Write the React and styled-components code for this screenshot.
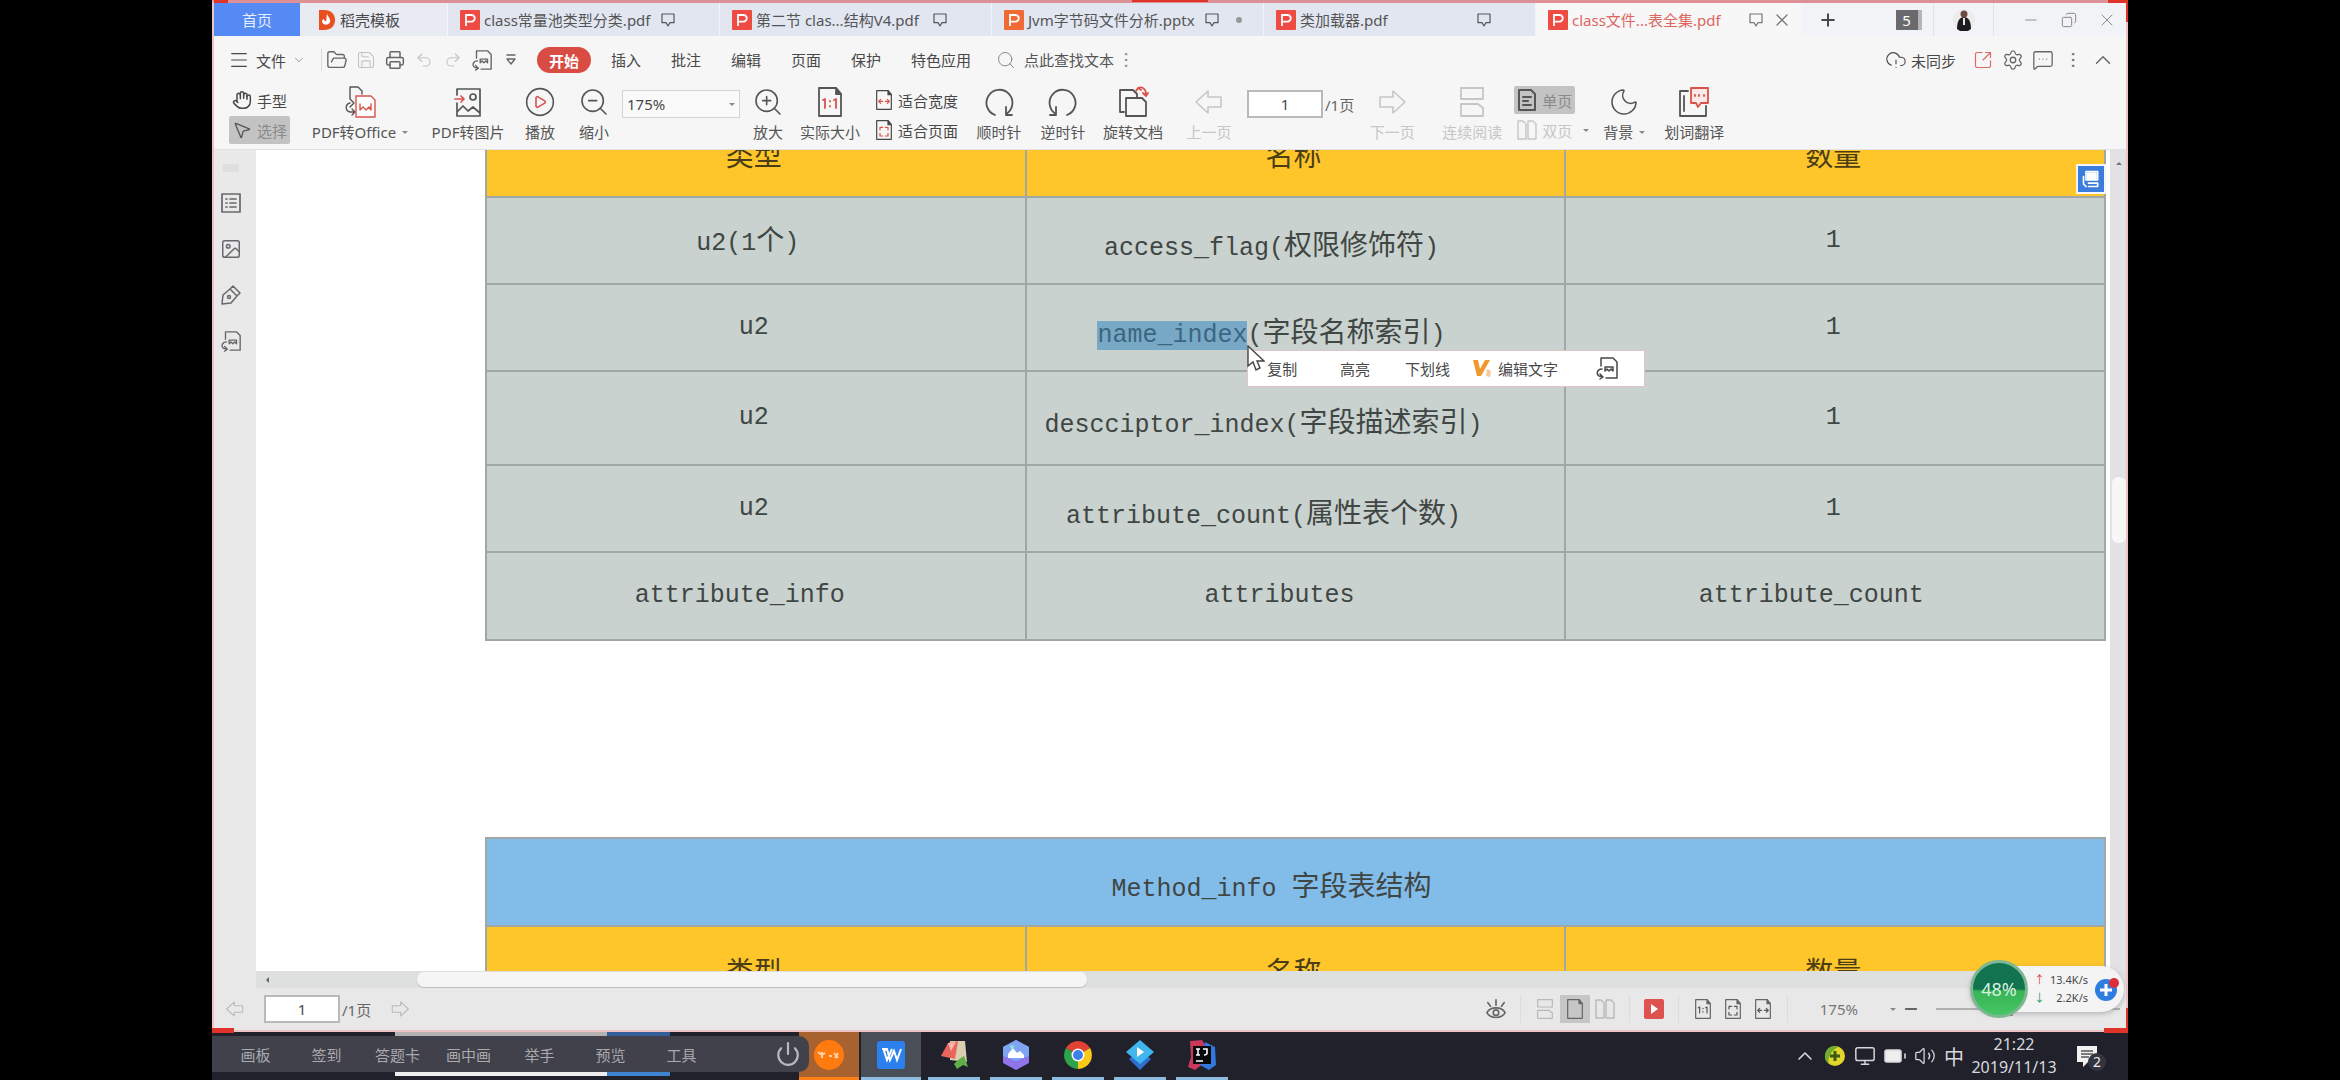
import styled, { createGlobalStyle, css } from "styled-components";
import {
    FolderOpen, Save, Printer, Undo2, Redo2, Search, CloudAlert, SquareArrowOutUpRight, Settings,
    MessageSquareMore, EllipsisVertical, ChevronUp, ChevronDown, Hand, MousePointer2, Menu, X, Plus, Minus,
    Copy, Moon, ZoomIn, ZoomOut, CirclePlay, Power, Volume2, Monitor, BatteryFull, Image,
} from "lucide-react";

/* ---------- data ---------- */

const tabs = [
    { kind: "pdf", name: "class常量池类型分类.pdf" },
    { kind: "pdf", name: "第二节 clas...结构V4.pdf" },
    { kind: "ppt", name: "Jvm字节码文件分析.pptx", changed: true },
    { kind: "pdf", name: "类加载器.pdf" },
    { kind: "pdf", name: "class文件...表全集.pdf", active: true },
];

const menus = ["插入", "批注", "编辑", "页面", "保护", "特色应用"];

const rows = [
    { height: 87, cells: [["u2(1", "个", ")", 16], ["access_flag(", "权限修饰符", ")", 48], ["1"]] },
    { height: 87, selected: true, cells: [["u2"], ["(", "字段名称索引", ")", 48], ["1"]] },
    { height: 94, cells: [["u2"], ["descciptor_index(", "字段描述索引", ")", 64], ["1"]] },
    { height: 87, cells: [["u2"], ["attribute_count(", "属性表个数", ")", 64], ["1"]] },
    { height: 88, cells: [["attribute_info", "", "", 32], ["attributes", "", "", 32], ["attribute_count", "", "", 48]] },
];

const remoteItems = ["画板", "签到", "答题卡", "画中画", "举手", "预览", "工具"];

/* ---------- icons ---------- */

const Line = ({ w = 24, h = w, box = "0 0 24 24", sw = 1.4, children }) => (
    <svg width={w} height={h} viewBox={box} fill="none" stroke="currentColor" strokeWidth={sw} strokeLinejoin="round" strokeLinecap="round" aria-hidden="true">
        {children}
    </svg>
);

const DocBadge = ({ color }) => (
    <svg width="20" height="20" viewBox="0 0 20 20" aria-hidden="true">
        <rect width="20" height="20" rx="1" fill={color} />
        <path d="M6 16V5h5.5a3.3 3.3 0 0 1 0 6.6H6" fill="none" stroke="#fff" strokeWidth="1.8" />
    </svg>
);

const DockerIcon = () => (
    <svg width="17" height="20" viewBox="0 0 17 20" aria-hidden="true">
        <path d="M1 0h5c7 0 11 4 11 10s-4 10-11 10H1z" fill="#e8501f" />
        <path d="M9 4c1 3 4 5 3 8-1 3-6 4-8 0 0-2 1-3 2-3 0 2 1 2 2 2 1-2 0-4 1-7z" fill="#fff" />
    </svg>
);

const PinIcon = () => (
    <Line w={16} sw={1.8}><path d="M3 3h18v13h-6l-3 5-3-5H3z" /></Line>
);

const ExportIcon = ({ size = 22 }) => (
    <Line w={size} sw={1.5}>
        <path d="M6 10V2h12l4 4v16H11" />
        <path d="M10 15v-4h8v4l-2-2-2 2-2-2z" />
        <path d="M7 13c-5 0-6 5-3 7l4 1M5 18l3 3-3 2" />
    </Line>
);

const OutlineIcon = () => (
    <Line w={20} h={20} box="0 0 20 20" sw={1.7}>
        <path d="M1 1h18v18H1zM5 6h1M5 10h1M5 14h1M9 6h6M9 10h6M9 14h6" />
    </Line>
);

const TagPenIcon = () => (
    <Line w={20} h={20} box="0 0 20 20" sw={1.5}>
        <path d="M1 19l1-9 7-6 7 7-6 7zM9 4l3-3 7 7-3 3" />
        <circle cx="8" cy="12" r="1.500" />
    </Line>
);

const ToOfficeIcon = () => (
    <Line w={32} box="0 0 32 32">
        <path d="M6 13V1h8l4 4v3M6 17c-5 1-5 8 0 9h4M8 23l3 3-3 3M6 13l4 4-4 4" />
        <path d="M12 10h15l4 4v17H12z" stroke="#d9534c" fill="#fff" />
        <path d="M16 18v6l3-3 3 3 3-3 2 3v-6" stroke="#d9534c" />
    </Line>
);

const ToImageIcon = () => (
    <Line w={28} h={30} box="0 0 28 30" sw={1.7}>
        <path d="M3 8V2h23v27H3V16M3 25l6-6 5 5 5-4 7 6" />
        <circle cx="19" cy="10" r="3" />
        <path d="M1 12h9M7 9l3 3-3 3" stroke="#d9534c" />
    </Line>
);

const SheetIcon = ({ w = 26, h = 30, children }) => (
    <Line w={w} h={h} box="0 0 26 30" sw={1.8}>
        <path d="M2 1h17l5 6v22H2z" />
        <path d="M19 1v6h5z" fill="currentColor" />
        <g stroke="#d9534c">{children}</g>
    </Line>
);

const OneToOne = () => <path d="M6 13l2-1v9M13 14v.5M13 19v.5M17 13l2-1v9" />;
const FitWidth = () => <path d="M6 17h5M8 14l-3 3 3 3M20 17h-5M18 14l3 3-3 3" />;
const FitPage = () => <path d="M7 15v-4h4M15 11h4v4M19 20v4h-4M11 24H7v-4" />;

const TurnIcon = ({ flip }) => (
    <Line w={30} box="0 0 30 30" sw={1.8}>
        {flip
            ? <path d="M19 28A13 13 0 1 0 8 27M8 20v8H2" />
            : <path d="M11 28A13 13 0 1 1 22 27M22 20v8h6" />}
    </Line>
);

const TurnDocIcon = () => (
    <Line w={32} box="0 0 32 32" sw={1.8}>
        <path d="M7 26H3V4h13l4 4v4" />
        <path d="M9 12h16l4 4v14H9z" />
        <path d="M21 2c4-2 8 1 8 6M26 7l3 3 2-3M19 5l2-3 3 2" stroke="#d9534c" />
    </Line>
);

const ArrowIcon = ({ flip, size = 28 }) => (
    <Line w={size} box="0 0 28 28" sw={1.6}>
        {flip
            ? <path d="M27 14L15 3v6H2v10h13v6z" />
            : <path d="M1 14L13 3v6h13v10H13v6z" />}
    </Line>
);

const FlowPagesIcon = ({ w = 26, h = 30 }) => (
    <Line w={w} h={h} box="0 0 26 30" sw={1.8}>
        <path d="M2 1v11h22V1zM2 29V17h17l5 4v8z" />
    </Line>
);

const SinglePageIcon = () => (
    <Line w={20} h={22} box="0 0 20 22" sw={2}>
        <path d="M2 1h12l4 4v16H2zM6 8h8M6 12h5M6 16h8" />
    </Line>
);

const TwoPagesIcon = () => (
    <Line w={20} h={20} box="0 0 20 20">
        <path d="M1 1h5l3 3v15H1zM11 1h5l3 3v15h-8z" />
    </Line>
);

const TranslateIcon = () => (
    <Line w={32} box="0 0 32 32" sw={1.8}>
        <path d="M10 5H2v25h26V20M6 10v15" />
        <path d="M13 2h17v15h-7l-3 4-2-4h-5z" stroke="#d9534c" fill="#fbe9e8" />
        <path d="M17 9v1M21 9v1M26 9v1" stroke="#d9534c" />
    </Line>
);

const EyeIcon = () => (
    <Line w={22} sw={1.8}>
        <path d="M2 16c4-7 16-7 20 0-4 7-16 7-20 0zM12 8V2M6 9L3 5M18 9l3-4" />
        <circle cx="12" cy="16" r="3" />
    </Line>
);

const ChromeIcon = () => (
    <svg width="28" height="28" viewBox="0 0 28 28" aria-hidden="true">
        <path d="M14 14L1.900 7A14 14 0 0 1 26.100 7z" fill="#e34133" />
        <path d="M14 14L26.100 7A14 14 0 0 1 14 28z" fill="#fbc918" />
        <path d="M14 14V28A14 14 0 0 1 1.900 7z" fill="#2fa24c" />
        <circle cx="14" cy="14" r="6.500" fill="#fff" />
        <circle cx="14" cy="14" r="5" fill="#3f7fe8" />
    </svg>
);

/* ---------- app ---------- */

const App = () => {
    return (
        <Screen>
            <GlobalStyle />
            <Desktop>
                <EdgeMark $top="0" $left="2px" $w="14px" $h="3px" />
                <EdgeMark $top="0" $left="48%" $w="76px" $h="2px" />
                <EdgeMark $top="0" $right="0" $w="20px" $h="3px" />
                <EdgeMark $top="0" $right="0" $w="2px" $h="22px" />
                <OfficeWindow>
                    <TabStrip />
                    <MenuRow />
                    <Ribbon />
                    <WorkArea />
                    <StatusBar />
                    <SpeedWidget />
                    <EdgeMark $bottom="-3px" $left="-2px" $w="22px" $h="5px" />
                    <EdgeMark $bottom="-3px" $right="-2px" $w="24px" $h="5px" />
                    <EdgeMark $bottom="0" $right="-2px" $w="2px" $h="22px" />
                </OfficeWindow>
                <TaskBar />
            </Desktop>
        </Screen>
    );
};

export default App;

const TabStrip = () => (
    <Tabs>
        <HomeTab>首页</HomeTab>
        <DockerTab><DockerIcon />稻壳模板</DockerTab>
        {tabs.map((tab) => (
            <Tab key={tab.name} $active={tab.active}>
                <DocBadge color={tab.kind === "pdf" ? "#ee4b45" : "#f06a35"} />
                <TabName>{tab.name}</TabName>
                <PinIcon />
                {tab.changed && <TabDot />}
                {tab.active && <X size={20} strokeWidth={1.5} />}
            </Tab>
        ))}
        <NewTab aria-label="新建"><Plus size={20} strokeWidth={2.4} /></NewTab>
        <WindowTools>
            <CountSlot><CountBadge>5</CountBadge></CountSlot>
            <AvatarSlot aria-label="账号">
                <svg width="22" height="22" viewBox="0 0 22 22" aria-hidden="true">
                    <circle cx="11" cy="11" r="11" fill="#ececec" />
                    <path d="M4 20c0-7 2-12 7-12s7 5 7 12l-3 2H7z" fill="#1d1d1f" />
                    <circle cx="11" cy="5" r="3.500" fill="#6b4b40" />
                    <path d="M10 9h2v7h-2z" fill="#e6e6e6" />
                </svg>
            </AvatarSlot>
            <WinButton aria-label="最小化"><Minus size={18} strokeWidth={1.2} /></WinButton>
            <WinButton aria-label="还原"><Copy size={16} strokeWidth={1.5} /></WinButton>
            <WinButton aria-label="关闭"><X size={20} strokeWidth={1.2} /></WinButton>
        </WindowTools>
    </Tabs>
);

const MenuRow = () => (
    <MenuBar>
        <FileButton><Menu size={22} strokeWidth={1.2} />文件<ChevronDown size={14} strokeWidth={1.4} /></FileButton>
        <QuickButton aria-label="打开"><FolderOpen size={22} strokeWidth={1.5} /></QuickButton>
        <QuickButton aria-label="保存" $dim><Save size={20} strokeWidth={1.3} /></QuickButton>
        <QuickButton aria-label="打印"><Printer size={20} strokeWidth={1.8} /></QuickButton>
        <QuickButton aria-label="撤销" $dim><Undo2 size={18} strokeWidth={1.5} /></QuickButton>
        <QuickButton aria-label="恢复" $dim><Redo2 size={18} strokeWidth={1.5} /></QuickButton>
        <QuickButton aria-label="导出"><ExportIcon /></QuickButton>
        <QuickButton aria-label="更多"><Line w={10} h={12} box="0 0 10 12"><path d="M1 1h8M1 5h8l-4 5z" /></Line></QuickButton>
        <StartPill>开始</StartPill>
        {menus.map((name) => <MenuButton key={name}>{name}</MenuButton>)}
        <SearchLabel>
            <Search size={20} strokeWidth={1.2} />
            <SearchInput type="text" placeholder="点此查找文本" aria-label="点此查找文本" />
            <EllipsisVertical size={20} strokeWidth={1.2} />
        </SearchLabel>
        <MenuEnd>
            <SyncButton><CloudAlert size={22} strokeWidth={1.2} />未同步</SyncButton>
            <IconButton aria-label="分享" $red><SquareArrowOutUpRight size={20} strokeWidth={1.4} /></IconButton>
            <IconButton aria-label="设置"><Settings size={22} strokeWidth={1.4} /></IconButton>
            <IconButton aria-label="反馈"><MessageSquareMore size={22} strokeWidth={1.4} /></IconButton>
            <IconButton aria-label="更多"><EllipsisVertical size={20} strokeWidth={1.2} /></IconButton>
            <IconButton aria-label="收起"><ChevronUp size={26} strokeWidth={1.3} /></IconButton>
        </MenuEnd>
    </MenuBar>
);

const Ribbon = () => (
    <RibbonBar>
        <Pair>
            <PairButton><Hand size={20} strokeWidth={1.8} />手型</PairButton>
            <PairButton $picked><MousePointer2 size={20} strokeWidth={1.6} />选择</PairButton>
        </Pair>
        <Tool $w={140}><ToOfficeIcon /><ToolText>PDF转Office<Caret /></ToolText></Tool>
        <Tool $w={76}><ToImageIcon /><ToolText>PDF转图片</ToolText></Tool>
        <Tool $w={68}><Red><CirclePlay size={34} strokeWidth={1.2} /></Red><ToolText>播放</ToolText></Tool>
        <Tool $w={40}><ZoomOut size={34} strokeWidth={1.2} /><ToolText>缩小</ToolText></Tool>
        <ZoomBox>
            <ZoomField type="text" defaultValue="175%" aria-label="缩放比例" />
            <Caret />
        </ZoomBox>
        <Tool $w={48}><ZoomIn size={34} strokeWidth={1.2} /><ToolText>放大</ToolText></Tool>
        <Tool $w={76}><SheetIcon><OneToOne /></SheetIcon><ToolText>实际大小</ToolText></Tool>
        <FitPair>
            <PairButton><SheetIcon w={18} h={20}><FitWidth /></SheetIcon>适合宽度</PairButton>
            <PairButton><SheetIcon w={18} h={20}><FitPage /></SheetIcon>适合页面</PairButton>
        </FitPair>
        <Tool $w={64}><TurnIcon /><ToolText>顺时针</ToolText></Tool>
        <Tool $w={64}><TurnIcon flip /><ToolText>逆时针</ToolText></Tool>
        <Tool $w={76}><TurnDocIcon /><ToolText>旋转文档</ToolText></Tool>
        <Tool $w={76} $dim><ArrowIcon /><ToolText>上一页</ToolText></Tool>
        <PageBox>
            <PageField type="text" defaultValue="1" aria-label="页码" />
            <span>/1页</span>
        </PageBox>
        <Tool $w={76} $dim><ArrowIcon flip /><ToolText>下一页</ToolText></Tool>
        <Tool $w={84} $dim><FlowPagesIcon /><ToolText>连续阅读</ToolText></Tool>
        <Pair>
            <PairButton $picked><SinglePageIcon />单页</PairButton>
            <PairButton $dim><TwoPagesIcon />双页<Caret /></PairButton>
        </Pair>
        <Tool $w={64}><Moon size={34} strokeWidth={1.2} /><ToolText>背景<Caret /></ToolText></Tool>
        <Tool $w={76}><TranslateIcon /><ToolText>划词翻译</ToolText></Tool>
    </RibbonBar>
);

const WorkArea = () => (
    <Work>
        <SideBar>
            <SideGrip />
            <SideButton aria-label="目录"><OutlineIcon /></SideButton>
            <SideButton aria-label="缩略图"><Image size={22} strokeWidth={1.6} /></SideButton>
            <SideButton aria-label="批注"><TagPenIcon /></SideButton>
            <SideButton aria-label="导出"><ExportIcon /></SideButton>
        </SideBar>
        <Viewer>
            <ViewerRow>
                <Paper>
                    <InfoTable>
                        <thead><HeadRow /></thead>
                        <tbody>
                            {rows.map((row, i) => (
                                <tr key={i}>
                                    {row.cells.map((cell, n) => (
                                        <BodyCell key={n} $h={row.height} $pad={cell[3]} $han={n === 1 && cell[1]}>
                                            {row.selected && n === 1 && <Selection />}
                                            {cell[0]}{cell[1] && <Han>{cell[1]}</Han>}{cell[2]}
                                        </BodyCell>
                                    ))}
                                </tr>
                            ))}
                        </tbody>
                    </InfoTable>
                    <InfoTable>
                        <thead>
                            <tr><TitleCell colSpan={3}>Method_info <Han>字段表结构</Han></TitleCell></tr>
                            <HeadRow />
                        </thead>
                    </InfoTable>
                    <ConvertBadge aria-label="转换">
                        <Line w={20} sw={2}><path d="M6 3h14v10H6zM9 17h11v4H9M3 9v9l3 3" /><path d="M8 5h10v6H8z" fill="#fff" /></Line>
                    </ConvertBadge>
                </Paper>
                <VScroll><UpTick /><VThumb /></VScroll>
            </ViewerRow>
            <HScroll><LeftTick /><HThumb /></HScroll>
        </Viewer>
    </Work>
);

const HeadRow = () => (
    <tr>
        <HeadCell>类型</HeadCell>
        <HeadCell>名称</HeadCell>
        <HeadCell>数量</HeadCell>
    </tr>
);

const Selection = () => (
    <Selected>
        name_index
        <Popup>
            <PopupButton $w={68}>复制</PopupButton>
            <PopupButton $w={78}>高亮</PopupButton>
            <PopupButton $w={68}>下划线</PopupButton>
            <PopupButton $w={108}>
                <svg width="20" height="20" viewBox="0 0 20 20" aria-hidden="true">
                    <path d="M1 2h5l2 9 5-9h5L9 18H5z" fill="#f0982c" />
                    <path d="M15 11l4 2-1 6-4-1z" fill="#f6c79a" />
                </svg>
                编辑文字
            </PopupButton>
            <PopupButton $w={76} aria-label="导出"><ExportIcon size={24} /></PopupButton>
        </Popup>
        <Pointer width="18" height="26" viewBox="0 0 18 26" aria-hidden="true">
            <path d="M1 1v20l5-4 3 8 4-2-3-7h7z" fill="#fff" stroke="#444" strokeWidth="1.400" />
        </Pointer>
    </Selected>
);

const StatusBar = () => (
    <Status>
        <StatusButton $dim aria-label="上一页"><ArrowIcon size={18} /></StatusButton>
        <PageBox>
            <PageField type="text" defaultValue="1" aria-label="当前页" />
            <span>/1页</span>
        </PageBox>
        <StatusButton $dim aria-label="下一页"><ArrowIcon flip size={18} /></StatusButton>
        <StatusEnd>
            <StatusGroup><StatusButton aria-label="护眼模式"><EyeIcon /></StatusButton></StatusGroup>
            <StatusGroup>
                <StatusButton $dim aria-label="连续阅读"><FlowPagesIcon w={18} h={20} /></StatusButton>
                <StatusButton $picked aria-label="单页"><SheetIcon w={18} h={20} /></StatusButton>
                <StatusButton $dim aria-label="双页"><TwoPagesIcon /></StatusButton>
            </StatusGroup>
            <StatusGroup>
                <StatusButton aria-label="播放">
                    <svg width="20" height="20" viewBox="0 0 20 20" aria-hidden="true">
                        <rect width="20" height="20" rx="2" fill="#de5350" />
                        <path d="M7 5l7 5-7 5z" fill="#fff" />
                    </svg>
                </StatusButton>
            </StatusGroup>
            <StatusGroup>
                <StatusButton aria-label="实际大小"><SheetIcon w={18} h={20}><g stroke="#555"><OneToOne /></g></SheetIcon></StatusButton>
                <StatusButton aria-label="适合页面"><SheetIcon w={18} h={20}><g stroke="#555"><FitPage /></g></SheetIcon></StatusButton>
                <StatusButton aria-label="适合宽度"><SheetIcon w={18} h={20}><g stroke="#555"><FitWidth /></g></SheetIcon></StatusButton>
            </StatusGroup>
            <ZoomText>175%</ZoomText>
            <Caret />
            <StatusButton aria-label="缩小"><Minus size={18} strokeWidth={2.4} /></StatusButton>
            <ZoomLine type="range" defaultValue="40" aria-label="缩放" />
        </StatusEnd>
    </Status>
);

const SpeedWidget = () => (
    <Speed>
        <SpeedBall>48%</SpeedBall>
        <SpeedList>
            <SpeedRow><SpeedArrow $up>↑</SpeedArrow>13.4K/s</SpeedRow>
            <SpeedRow><SpeedArrow>↓</SpeedArrow>2.2K/s</SpeedRow>
        </SpeedList>
        <svg width="26" height="26" viewBox="0 0 26 26" aria-hidden="true">
            <circle cx="12" cy="14" r="11" fill="#2f7de1" />
            <path d="M12 8v12M6 14h12" stroke="#fff" strokeWidth="3" />
            <circle cx="20" cy="7" r="5" fill="#dd2f3a" />
        </svg>
    </Speed>
);

const TaskBar = () => (
    <Task>
        <RemoteStrip>
            <StripeRow $pale />
            <RemotePanel>
                {remoteItems.map((name) => <RemoteButton key={name}>{name}</RemoteButton>)}
                <PowerButton aria-label="退出"><Power size={26} strokeWidth={2} /></PowerButton>
            </RemotePanel>
            <StripeRow />
        </RemoteStrip>
        <AppButton $tone="orange" aria-label="直播">
            <svg width="30" height="30" viewBox="0 0 30 30" aria-hidden="true">
                <circle cx="15" cy="15" r="15" fill="#ff7a0f" />
                <path d="M4 12l4 3 3-2M8 12v6M15 16h3M20 13l4 5M24 13l-3 5" stroke="#ffd3a8" strokeWidth="2" fill="none" />
            </svg>
        </AppButton>
        <AppButton $tone="current" aria-label="WPS">
            <svg width="28" height="28" viewBox="0 0 28 28" aria-hidden="true">
                <rect width="28" height="28" rx="3" fill="#2c80ee" />
                <path d="M5 8h5l3 11 4-9 3 9 4-11M10 8l-3 2 3 9 5-11" fill="none" stroke="#fff" strokeWidth="2" />
            </svg>
        </AppButton>
        <AppButton aria-label="笔记">
            <svg width="28" height="30" viewBox="0 0 28 30" aria-hidden="true">
                <path d="M10 1h15l2 21-17-2z" fill="#d9cfae" />
                <path d="M8 3l10-2-3 18-14-3z" fill="#e9655c" />
                <path d="M8 3l8-1-5 9z" fill="#f7b7ae" />
                <path d="M18 20l6-4 4 11-5-2-6 4-3-5z" fill="#5fae48" />
            </svg>
        </AppButton>
        <AppButton aria-label="图库">
            <svg width="28" height="30" viewBox="0 0 28 30" aria-hidden="true">
                <path d="M14 0l13 7v16l-13 7-13-7V7z" fill="#8f74ea" />
                <path d="M14 0l13 7v9l-13 5-13-5V7z" fill="#7ea4f2" />
                <path d="M6 18v-4l5-6 4 5 3-2 4 4v3z" fill="#fff" />
                <circle cx="10" cy="7" r="2" fill="#8fe0e0" />
            </svg>
        </AppButton>
        <AppButton aria-label="Chrome"><ChromeIcon /></AppButton>
        <AppButton aria-label="播放器">
            <svg width="30" height="30" viewBox="0 0 30 30" aria-hidden="true">
                <path d="M15 10l11 9-11 11L4 19z" fill="#2f6fd0" />
                <path d="M15 0l14 12-14 12L1 12z" fill="#41b5ee" />
                <path d="M12 7l7 5-7 5z" fill="#fff" />
            </svg>
        </AppButton>
        <AppButton aria-label="IntelliJ IDEA">
            <svg width="30" height="30" viewBox="0 0 30 30" aria-hidden="true">
                <path d="M3 1l12-1 5 8-4 16-8 6-7-3 3-10z" fill="#c8395c" />
                <path d="M18 2l10 5 1 18-7 5-9-5z" fill="#3179e0" />
                <rect x="6" y="6" width="18" height="18" fill="#0a0a0c" />
                <path d="M9 9h4M11 9v6M9 15h4M16 9h4v4q0 2-3 2M9 21h7" stroke="#fff" strokeWidth="1.600" fill="none" />
            </svg>
        </AppButton>
        <Tray>
            <TrayButton aria-label="显示隐藏的图标"><ChevronUp size={24} strokeWidth={1.6} /></TrayButton>
            <TrayButton aria-label="安全卫士">
                <svg width="22" height="22" viewBox="0 0 22 22" aria-hidden="true">
                    <circle cx="11" cy="11" r="10" fill="#e3d62a" />
                    <path d="M11 1a10 10 0 0 0-6 18c-2-6 2-13 9-17z" fill="#6fae2c" />
                    <path d="M11 6v10M6 11h10" stroke="#3c5a14" strokeWidth="3" />
                </svg>
            </TrayButton>
            <TrayButton aria-label="网络"><Monitor size={22} strokeWidth={1.6} /></TrayButton>
            <TrayButton aria-label="电池"><BatteryFull size={24} fill="#eee" strokeWidth={1.6} /></TrayButton>
            <TrayButton aria-label="音量"><Volume2 size={22} strokeWidth={1.4} /></TrayButton>
            <InputMode>中</InputMode>
            <Clock><span>21:22</span><span>2019/11/13</span></Clock>
            <NoticeButton aria-label="通知">
                <svg width="22" height="22" viewBox="0 0 22 22" aria-hidden="true">
                    <path d="M1 1h20v16H12l-5 5v-5H1z" fill="#f1f1f1" />
                    <path d="M5 6h12M5 9h12M5 12h8" stroke="#555" strokeWidth="1.400" />
                </svg>
                <NoticeCount>2</NoticeCount>
            </NoticeButton>
        </Tray>
    </Task>
);

/* ---------- styles ---------- */

const GlobalStyle = createGlobalStyle`
    * {
        box-sizing: border-box;
    }
    body {
        margin: 0;
        background: #000;
    }
    body, button, input {
        font-family: "Noto Sans", "Noto Sans CJK SC", sans-serif;
        font-size: 15px;
        color: #484848;
    }
    button {
        border: 0;
        padding: 0;
        background: none;
        white-space: nowrap;
    }
    svg {
        flex: none;
    }
`

const Screen = styled.div`
    height: 100vh;
    padding: 0 212px;
    background: #000;
    overflow: hidden;
`

const Desktop = styled.main`
    position: relative;
    height: 100%;
    display: flex;
    flex-direction: column;
`

const EdgeMark = styled.i`
    position: absolute;
    z-index: 5;
    top: ${(p) => p.$top};
    right: ${(p) => p.$right};
    bottom: ${(p) => p.$bottom};
    left: ${(p) => p.$left};
    width: ${(p) => p.$w};
    height: ${(p) => p.$h};
    background: #e0342b;
`

const OfficeWindow = styled.section`
    position: relative;
    flex: 1;
    min-height: 0;
    display: flex;
    flex-direction: column;
    border: 2px solid #edc3c6;
    border-top: 3px solid #dd9197;
    background: #e8e8e8;
`

const Tabs = styled.nav`
    display: flex;
    height: 33px;
    background: #f2f3f6;
`

const HomeTab = styled.button`
    width: 86px;
    background: #5589f4;
    color: #e6eeff;
`

const DockerTab = styled.button`
    display: flex;
    align-items: center;
    gap: 5px;
    width: 148px;
    padding-left: 18px;
    background: #e9ebf2;
    border-right: 1px solid #f4f5f9;
`

const Tab = styled.div`
    display: flex;
    align-items: center;
    width: 272px;
    padding-left: 12px;
    border-right: 1px solid #f1f3f9;
    background: #e1e6f1;
    color: #555;
    svg + svg {
        margin-left: 8px;
    }
    ${(p) => p.$active && css`
        width: 266px;
        background: #f7f7f8;
        color: #dd6660;
        svg {
            color: #777;
        }
    `}
`

const TabName = styled.span`
    width: 180px;
    padding-left: 4px;
    white-space: nowrap;
`

const TabDot = styled.i`
    width: 6px;
    height: 6px;
    margin-left: 16px;
    border-radius: 50%;
    background: #999;
`

const NewTab = styled.button`
    width: 52px;
    display: grid;
    place-items: center;
`

const WindowTools = styled.div`
    display: flex;
    margin-left: auto;
    color: #777;
`

const CountSlot = styled.div`
    width: 50px;
    display: grid;
    place-items: center;
    border-right: 1px solid #e2e2e6;
`

const CountBadge = styled.span`
    width: 26px;
    height: 20px;
    border-right: 4px solid #b4b4b6;
    background: #6a6a6c;
    color: #fff;
    line-height: 20px;
    text-align: center;
`

const AvatarSlot = styled.button`
    width: 60px;
    margin-right: 18px;
    display: grid;
    place-items: center;
    border-right: 1px solid #e2e2e6;
`

const WinButton = styled.button`
    width: 38px;
    display: grid;
    place-items: center;
    color: #888;
    svg {
        transform: scaleX(-1);
    }
`

const MenuBar = styled.div`
    display: flex;
    align-items: center;
    height: 48px;
    padding: 0 8px 0 14px;
    background: #f6f6f6;
`

const FileButton = styled.button`
    display: flex;
    align-items: center;
    gap: 6px;
    width: 94px;
    border-right: 1px solid #dcdcdc;
    svg:last-child {
        color: #888;
    }
`

const QuickButton = styled.button`
    width: 29px;
    height: 32px;
    display: grid;
    place-items: center;
    color: ${(p) => (p.$dim ? "#c4c4c4" : "#666")};
`

const StartPill = styled.button`
    width: 54px;
    height: 26px;
    margin: 0 5px 0 12px;
    border-radius: 13px;
    background: #d94c43;
    color: #fff;
    font-weight: 700;
`

const MenuButton = styled.button`
    padding: 0 15px;
    line-height: 32px;
`

const SearchLabel = styled.label`
    display: flex;
    align-items: center;
    gap: 8px;
    margin-left: 10px;
    color: #888;
    svg:last-child {
        margin-left: -8px;
    }
`

const SearchInput = styled.input`
    width: 92px;
    padding: 0;
    border: 0;
    background: none;
    &::placeholder {
        color: #555;
        opacity: 1;
    }
`

const MenuEnd = styled.div`
    display: flex;
    align-items: center;
    margin-left: auto;
`

const SyncButton = styled.button`
    display: flex;
    align-items: center;
    gap: 4px;
    margin-right: 12px;
`

const IconButton = styled.button`
    width: 30px;
    height: 32px;
    display: grid;
    place-items: center;
    color: ${(p) => (p.$red ? "#dd6a66" : "#666")};
`

const RibbonBar = styled.div`
    display: flex;
    align-items: flex-start;
    height: 66px;
    padding: 2px 15px 0;
    border-bottom: 1px solid #e2e2e2;
    background: #f6f6f6;
    white-space: nowrap;
`

const Pair = styled.div`
    display: flex;
    flex-direction: column;
    align-items: flex-start;
    gap: 2px;
`

const FitPair = styled(Pair)`
    padding: 0 6px 0 4px;
`

const PairButton = styled.button`
    display: flex;
    align-items: center;
    gap: 5px;
    height: 28px;
    padding: 0 3px;
    border-radius: 2px;
    ${(p) => p.$picked && css`
        background: #c3c3c3;
        color: #8a8a8a;
        svg {
            color: #555;
        }
    `}
    ${(p) => p.$dim && css`
        color: #c6c6c6;
    `}
`

const Tool = styled.button`
    display: flex;
    flex-direction: column;
    align-items: center;
    justify-content: space-between;
    width: ${(p) => p.$w}px;
    height: 58px;
    flex: none;
    color: ${(p) => (p.$dim ? "#c6c6c6" : "#555")};
    > svg, > span > svg {
        height: 32px;
    }
`

const ToolText = styled.span`
    display: flex;
    align-items: center;
    line-height: 24px;
`

const Red = styled.span`
    display: flex;
    path {
        stroke: #d9534c;
    }
`

const Caret = styled.i`
    width: 0;
    margin-left: 6px;
    border: 3px solid transparent;
    border-top-color: #888;
    border-bottom: 0;
`

const ZoomBox = styled.div`
    display: flex;
    align-items: center;
    width: 118px;
    height: 28px;
    margin: 4px 4px 0 8px;
    padding-right: 4px;
    border: 1px solid #d3d3d3;
    background: #fafafa;
`

const ZoomField = styled.input`
    flex: 1;
    min-width: 0;
    border: 0;
    padding: 0 4px;
    background: none;
`

const PageBox = styled.div`
    display: flex;
    align-items: center;
    gap: 2px;
    margin-top: 4px;
    color: #666;
`

const PageField = styled.input`
    width: 76px;
    height: 28px;
    border: 2px solid #b9b9b9;
    background: #fff;
    text-align: center;
`

const Work = styled.div`
    flex: 1;
    min-height: 0;
    display: flex;
`

const SideBar = styled.aside`
    width: 42px;
    padding: 14px 8px 0 0;
    display: flex;
    flex-direction: column;
    align-items: center;
    gap: 16px;
    background: #e9e9ea;
`

const SideGrip = styled.i`
    width: 16px;
    height: 8px;
    background: #dfdfe0;
`

const SideButton = styled.button`
    width: 30px;
    height: 30px;
    display: grid;
    place-items: center;
    color: #68686c;
`

const Viewer = styled.div`
    flex: 1;
    min-width: 0;
    display: flex;
    flex-direction: column;
`

const ViewerRow = styled.div`
    flex: 1;
    min-height: 0;
    display: flex;
`

const Paper = styled.div`
    position: relative;
    flex: 1;
    overflow: hidden;
    padding: 0 4px 0 229px;
    background: #fff;
`

/* the first table is scrolled so that half of its header is cut off */
const InfoTable = styled.table`
    width: 100%;
    margin: -41px 0 0;
    border-collapse: collapse;
    table-layout: fixed;
    background: #c9d2ce;
    font-family: "Liberation Mono", "Noto Sans CJK SC", monospace;
    font-size: 25px;
    line-height: 36px;
    color: #3f4644;
    & + & {
        margin-top: 196px;
    }
    th, td {
        border: 2px solid #9fa8a6;
        text-align: center;
        font-weight: 400;
    }
`

const HeadCell = styled.th`
    height: 87px;
    padding: 10px 4px 0 0;
    background: #fec62b;
    color: #4b3d14;
    font-size: 28px;
`

const TitleCell = styled.th`
    height: 88px;
    padding: 10px 48px 0 0;
    background: #82bdea;
`

const BodyCell = styled.td`
    height: ${(p) => p.$h}px;
    padding: ${(p) => (p.$han ? "10px" : "0")} ${(p) => p.$pad || 4}px 0 0;
`

const Han = styled.span`
    font-family: "Noto Sans CJK SC", sans-serif;
    font-size: 28px;
`

const Selected = styled.mark`
    position: relative;
    background: #77a9c6;
    color: #3d6580;
`

const Popup = styled.div`
    position: absolute;
    z-index: 2;
    top: 100%;
    left: 100%;
    display: flex;
    width: 398px;
    height: 37px;
    border: 1px solid #e3c3c3;
    background: #fff;
`

const PopupButton = styled.button`
    width: ${(p) => p.$w}px;
    display: flex;
    align-items: center;
    justify-content: center;
    gap: 6px;
`

const Pointer = styled.svg`
    position: absolute;
    z-index: 3;
    top: 24px;
    left: 100%;
`

const ConvertBadge = styled.button`
    position: absolute;
    top: 14px;
    right: 4px;
    width: 30px;
    height: 30px;
    display: grid;
    place-items: center;
    border: 2px solid #f4f6fb;
    background: #3b7ddd;
    color: #fff;
`

const VScroll = styled.div`
    width: 16px;
    padding: 12px 0 0 2px;
    background: #e2e1e3;
`

const UpTick = styled.i`
    display: block;
    width: 6px;
    margin: 0 auto 312px;
    border: 3px solid transparent;
    border-bottom-color: #777;
    border-top: 0;
`

const VThumb = styled.div`
    height: 66px;
    border-radius: 6px;
    background: #f7f7f7;
`

const HScroll = styled.div`
    display: flex;
    align-items: center;
    height: 17px;
    padding-left: 10px;
    background: #dedfdf;
`

const LeftTick = styled.i`
    border: 3px solid transparent;
    border-right-color: #666;
    border-left: 0;
`

const HThumb = styled.div`
    width: 36%;
    height: 15px;
    margin-left: 148px;
    border-radius: 7px;
    background: #f5f5f5;
    box-shadow: 0 1px 1px #bbb;
`

const Status = styled.footer`
    display: flex;
    align-items: center;
    height: 42px;
    padding: 0 6px;
    background: #e8e8e8;
    ${PageBox} {
        margin: 0 14px;
    }
`

const StatusButton = styled.button`
    width: 30px;
    height: 28px;
    display: grid;
    place-items: center;
    color: ${(p) => (p.$dim ? "#b9b9b9" : "#666")};
    background: ${(p) => (p.$picked ? "#c6c6c6" : "none")};
`

const StatusEnd = styled.div`
    display: flex;
    align-items: center;
    margin-left: auto;
`

const StatusGroup = styled.div`
    display: flex;
    padding: 0 9px;
    border-right: 1px solid #dcdcdc;
`

const ZoomText = styled.span`
    margin: 0 26px 0 32px;
    color: #777;
`

const ZoomLine = styled.input`
    appearance: none;
    width: 184px;
    height: 2px;
    margin: 0 0 0 10px;
    background: #b0b0b0;
    &::-webkit-slider-thumb {
        appearance: none;
        width: 6px;
        height: 14px;
        background: #888;
    }
`

const Speed = styled.div`
    position: absolute;
    right: 2px;
    bottom: 18px;
    z-index: 4;
    display: flex;
    align-items: center;
    width: 154px;
    height: 46px;
    padding-right: 4px;
    border-radius: 23px;
    background: #f4f4f4;
    box-shadow: 0 2px 5px #8888;
`

const SpeedBall = styled.div`
    width: 58px;
    height: 58px;
    flex: none;
    border: 3px solid #7fb694;
    border-radius: 50%;
    background: linear-gradient(#12734f 0 50%, #37b457 54%, #46c664);
    color: #d6f2df;
    font-size: 18px;
    line-height: 52px;
    text-align: center;
`

const SpeedList = styled.div`
    flex: 1;
    padding: 0 6px 0 6px;
`

const SpeedRow = styled.div`
    display: flex;
    justify-content: space-between;
    font-size: 11px;
    line-height: 18px;
`

const SpeedArrow = styled.span`
    color: ${(p) => (p.$up ? "#e0453c" : "#2f9a5a")};
`

const Task = styled.div`
    display: flex;
    height: 48px;
    background: #20212b;
`

const RemoteStrip = styled.div`
    display: flex;
    flex-direction: column;
    justify-content: space-between;
    width: 587px;
    flex: none;
    padding-bottom: 4px;
`

const StripeRow = styled.i`
    width: 275px;
    height: 4px;
    margin-left: 183px;
    background: linear-gradient(90deg, ${(p) => (p.$pale ? "#b5b1b3" : "#eeeeee")} 0 77%, ${(p) => (p.$pale ? "#335d99" : "#3d83d0")} 77%);
`

const RemotePanel = styled.div`
    position: relative;
    z-index: 1;
    display: flex;
    align-items: center;
    width: 597px;
    height: 36px;
    padding: 0 8px;
    border-radius: 0 10px 10px 0;
    background: #40414a;
`

const RemoteButton = styled.button`
    width: 71px;
    color: #a9a9ae;
`

const PowerButton = styled.button`
    display: flex;
    margin-left: auto;
    color: #b9b9be;
`

const AppButton = styled.button`
    width: 60px;
    margin-right: 2px;
    display: grid;
    place-items: center;
    border-bottom: 3px solid #8ebbe0;
    ${(p) => p.$tone === "orange" && css`
        background: #a7622f;
        border-color: #ff7f17;
    `}
    ${(p) => p.$tone === "current" && css`
        background: #4a4e56;
    `}
    ${(p) => !p.$tone && css`
        width: 52px;
        margin: 0 5px;
    `}
`

const Tray = styled.div`
    display: flex;
    align-items: center;
    margin-left: auto;
    padding-right: 20px;
    color: #d8d8dc;
`

const TrayButton = styled.button`
    width: 30px;
    display: grid;
    place-items: center;
    color: #d8d8dc;
`

const InputMode = styled.span`
    padding: 0 6px 0 4px;
    font-size: 20px;
`

const Clock = styled.time`
    display: flex;
    flex-direction: column;
    align-items: center;
    width: 88px;
    font-size: 16px;
    line-height: 23px;
`

const NoticeButton = styled.button`
    position: relative;
    display: flex;
    margin-left: 18px;
    margin-right: 10px;
`

const NoticeCount = styled.span`
    position: absolute;
    top: 8px;
    left: 12px;
    width: 18px;
    height: 18px;
    border-radius: 50%;
    background: #33343d;
    color: #eee;
    font-size: 14px;
    line-height: 18px;
    text-align: center;
`
